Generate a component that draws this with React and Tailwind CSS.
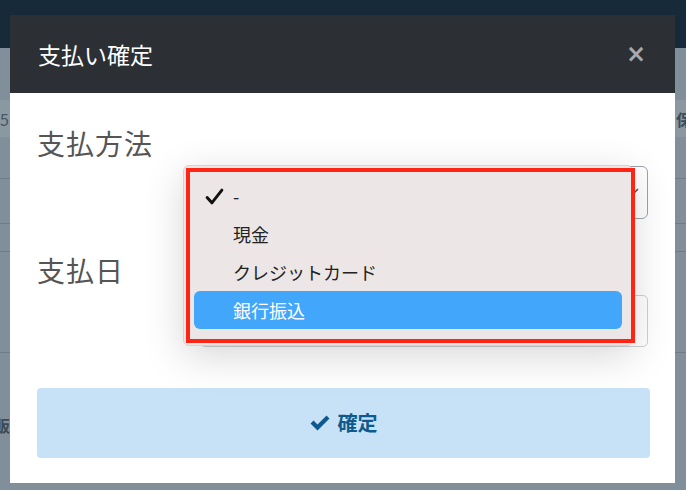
import React from 'react';

// Payment confirmation modal with an open native-style select menu
const OPTIONS = ['-', '現金', 'クレジットカード', '銀行振込'];

const font = { fontFamily: '"Noto Sans CJK JP", "Noto Sans", sans-serif' };

const App = () => {
  const selected = 0;
  const hovered = 3;

  return (
    <div className="relative w-[686px] h-[490px] overflow-hidden bg-[#808f99]" style={font}>
      {/* Page behind the modal */}
      <div className="h-[48px] bg-[#172a3a]" />
      <div className="h-[52px]" />
      <div className="h-[37px] bg-[#8a98a2] flex items-center justify-between text-[#3d4a55] text-[16px] font-bold">
        <span className="ml-[0px] font-normal text-[#4a5763]">5</span>
        <span className="-mr-[6px]">保</span>
      </div>
      <div className="h-[42px] border-b border-[#6f7d88]" />
      <div className="h-[45px] border-b border-[#6f7d88]" />
      <div className="h-[28px] border-b border-[#6f7d88]" />
      <div className="h-[101px] border-b border-[#6f7d88]" />
      <div className="h-[144px] flex items-center text-[16px] font-bold text-[#3d4a55]">
        <span className="-ml-[6px]">販</span>
      </div>

      {/* Modal */}
      <div className="absolute left-[10px] top-[15px] w-[665px] h-[468px] bg-white">
        <div className="h-[78px] bg-[#2c3035] flex items-center justify-between pl-[28px] pr-[29px]">
          <h1 className="text-[23px] text-white">支払い確定</h1>
          <span className="text-[24px] leading-none font-bold text-[#a6a9ad]" style={{ fontFamily: '"DejaVu Sans", sans-serif' }}>×</span>
        </div>

        <div className="relative px-[27px] pt-[32px]">
          {/* 支払方法 */}
          <div className="h-[36px] flex items-center text-[28px] text-[#555] tracking-[1px]">支払方法</div>
          <div className="mt-[5px] ml-[163px] h-[53px] border border-[#9aa3ad] rounded-[6px] relative">
            <svg className="absolute right-[8px] top-[21px]" width="18" height="10" viewBox="0 0 18 10" fill="none" stroke="#555" strokeWidth="1.6">
              <path d="M1 1l8 8 8-8" />
            </svg>
          </div>

          {/* 支払日 */}
          <div className="mt-[33px] h-[36px] flex items-center text-[28px] text-[#555] tracking-[1px]">支払日</div>
          <div className="mt-[7px] ml-[163px] h-[52px] border border-[#cdd1d6] rounded-[5px] flex">
            <div className="w-[266px] border-r border-[#cdd1d6]" />
            <div className="flex-1" />
          </div>

          {/* Submit */}
          <button className="mt-[41px] w-[613px] h-[70px] bg-[#c7e2f6] rounded-[4px] flex items-center justify-center gap-[8px] text-[#0e5a8e] text-[20px] font-bold">
            <svg width="20" height="16" viewBox="0 0 20 16" fill="#0e5a8e">
              <path d="M0.5 8.5l3-3 4 4 9-9 3 3-12 12z" />
            </svg>
            確定
          </button>

          {/* Open select menu */}
          <div className="absolute left-[173px] top-[72px] w-[450px] h-[181px] bg-[#ece6e6] rounded-[6px] border border-[#d6d2d2] shadow-[0_10px_40px_rgba(0,0,0,0.16)] pt-[11px] px-[10px]">
            {OPTIONS.map((opt, i) => (
              <div
                key={opt}
                className={`h-[38px] flex items-center rounded-[6px] text-[18px] ${i === hovered ? 'bg-[#42a6fb] text-white' : 'text-[#222]'}`}
              >
                <span className="w-[39px] flex justify-center pl-[1px]">
                  {i === selected && (
                    <svg width="19" height="17" viewBox="0 0 18 16" fill="none" stroke="#111" strokeWidth="2.8" strokeLinecap="round" strokeLinejoin="round">
                      <path d="M2 9l4.5 5L16 2" />
                    </svg>
                  )}
                </span>
                <span>{opt}</span>
              </div>
            ))}
            {/* Red annotation frame */}
            <div className="absolute left-[2px] top-[2px] right-[-3px] bottom-[2px] border-[4px] border-[#ff2414]" />
          </div>
        </div>
      </div>
    </div>
  );
};

export default App;
